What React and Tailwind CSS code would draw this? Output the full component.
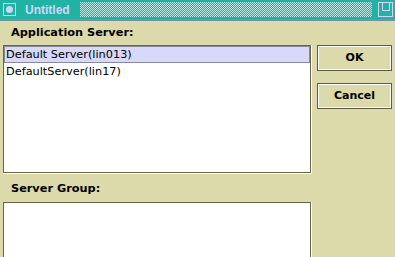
const App = () => {
  return (
    <div className="w-[395px] h-[257px] overflow-hidden bg-[#dcd9ab] font-['DejaVu_Sans',sans-serif] text-black">
      {/* TITLE BAR */}
      <div className="h-[19px] bg-[#20b3a3] flex items-center">
        <div className="ml-[3px] w-[13px] h-[13px] border border-[#d4d4f8] flex items-center justify-center">
          <div className="w-[7px] h-[7px] rounded-full bg-[#d4d4f8]" />
        </div>
        <span className="ml-[9px] text-[12px] font-bold text-[#d4d4f8] font-['Liberation_Sans',sans-serif] leading-none">
          Untitled
        </span>
        <div className="ml-[10px] w-[292px] h-[15px] bg-[repeating-conic-gradient(#20b3a3_0_25%,#b4e6e2_0_50%)] bg-[length:2px_2px]" />
        <svg className="ml-auto mr-[2px]" width="15" height="15" viewBox="0 0 15 15" fill="none" stroke="#d4d4f8" strokeWidth="1" shapeRendering="crispEdges">
          <rect x="0.5" y="0.5" width="14" height="14" />
          <path d="M4.5 1v7.5h7v-7.5" />
        </svg>
      </div>
      <div className="h-[2px] bg-[#7890a0]" />

      <div className="flex">
        {/* LEFT COLUMN */}
        <div className="ml-[3px] w-[309px]">
          <div className="h-[24px] pl-[8px] pt-[5px] text-[11.3px] font-bold leading-[14px]">
            Application Server:
          </div>
          <div className="w-[309px] border-r border-b border-white">
            <div className="h-[128px] bg-white border border-[#666648]">
              <div className="h-[17px] bg-[#d8d8f8] border border-[#8888a0] pl-[1px] text-[11.3px] leading-[15px]">
                Default Server(lin013)
              </div>
              <div className="h-[17px] pl-[2px] text-[11.3px] leading-[17px]">
                DefaultServer(lin17)
              </div>
            </div>
          </div>
          <div className="h-[28px] pl-[8px] pt-[8px] text-[11.3px] font-bold leading-[14px]">
            Server Group:
          </div>
          <div className="w-[309px] border-r border-b border-white">
            <div className="h-[80px] bg-white border border-[#666648]" />
          </div>
        </div>

        {/* BUTTONS */}
        <div className="ml-[5px] pt-[24px] flex flex-col gap-[12px]">
          <Button label="OK" />
          <Button label="Cancel" />
        </div>
      </div>
    </div>
  );
};

const Button = ({ label }) => (
  <button className="w-[75px] h-[26px] border border-[#5c5c44] shadow-[inset_1px_1px_0_#ffffff,inset_-1px_-1px_0_#ffffff] bg-[#dcd9ab] text-[11px] font-bold font-['DejaVu_Sans',sans-serif] flex items-center justify-center">
    {label}
  </button>
);

export default App;
